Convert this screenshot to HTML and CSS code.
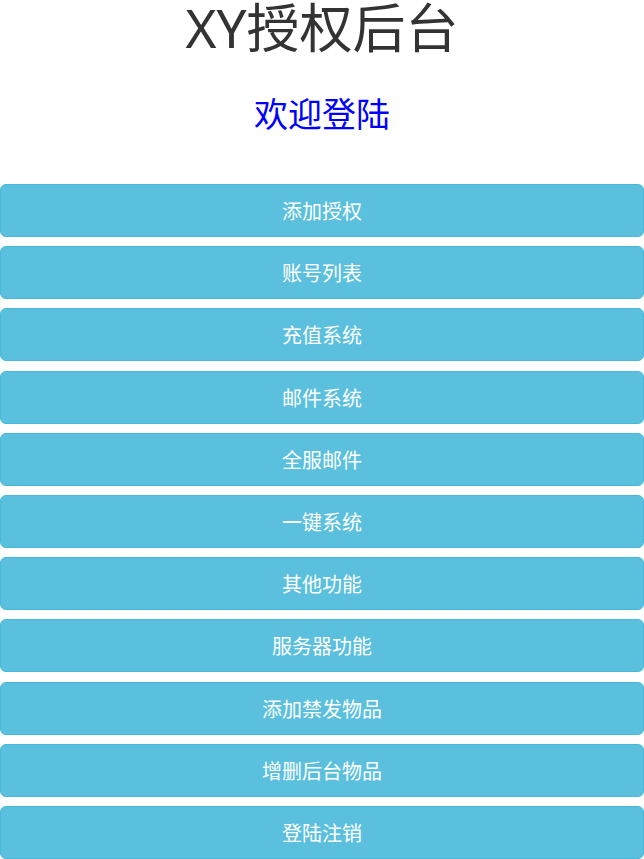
FILE: index.html
```html
<!DOCTYPE html>
<html lang="zh-CN">
<head>
<meta charset="utf-8">
<title>XY授权后台</title>
<link rel="stylesheet" href="styles.css">
</head>
<body>
<div class="page">
  <header class="head">
    <h1 class="title">XY授权后台</h1>
    <h2 class="welcome">欢迎登陆</h2>
  </header>
  <nav class="menu">
    <a class="btn" href="#">添加授权</a>
    <a class="btn" href="#">账号列表</a>
    <a class="btn" href="#">充值系统</a>
    <a class="btn" href="#">邮件系统</a>
    <a class="btn" href="#">全服邮件</a>
    <a class="btn" href="#">一键系统</a>
    <a class="btn" href="#">其他功能</a>
    <a class="btn" href="#">服务器功能</a>
    <a class="btn" href="#">添加禁发物品</a>
    <a class="btn" href="#">增删后台物品</a>
    <a class="btn" href="#">登陆注销</a>
  </nav>
</div>
</body>
</html>
```
FILE: styles.css
```css
html, body {
  margin: 0;
  padding: 0;
  background: #fff;
}
body {
  font-family: "Noto Sans", "Noto Sans CJK SC", sans-serif;
  color: #333;
}
.page {
  display: flex;
  flex-direction: column;
}
.head {
  display: flex;
  flex-direction: column;
  align-items: center;
  height: 184px;
}
.title {
  margin: 0;
  font-size: 53px;
  line-height: 56px;
  font-weight: 400;
  color: #333;
}
.welcome {
  margin: 40px 0 0 0;
  font-size: 34px;
  line-height: 36px;
  font-weight: 400;
  color: #0000ff;
}
.menu {
  display: flex;
  flex-direction: column;
  gap: 9.2px;
}
.btn {
  display: flex;
  align-items: center;
  justify-content: center;
  height: 53px;
  box-sizing: border-box;
  background: #5bc0de;
  border: 1px solid #46b8da;
  border-radius: 6px;
  color: #fff;
  font-size: 20px;
  text-decoration: none;
}
```
